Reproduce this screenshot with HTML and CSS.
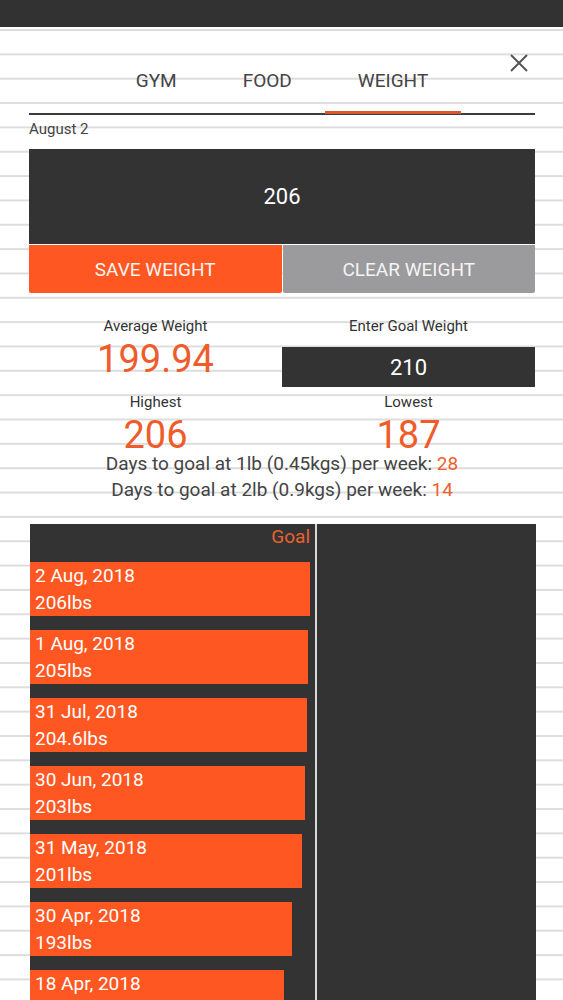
FILE: index.html
```html
<!DOCTYPE html>
<html lang="en">
<head>
<meta charset="utf-8">
<title>Weight</title>
<link rel="stylesheet" href="styles.css">
</head>
<body>
<div class="statusbar"></div>
<main class="page">
  <header class="header">
    <nav class="tabs">
      <div class="tab">GYM</div>
      <div class="tab">FOOD</div>
      <div class="tab active">WEIGHT</div>
    </nav>
    <button class="close" aria-label="Close">
      <svg viewBox="0 0 18 18" width="18" height="18"><path d="M1 1L17 17M17 1L1 17" stroke="#555" stroke-width="2" fill="none"/></svg>
    </button>
  </header>
  <div class="date">August 2</div>
  <div class="weight-input">206</div>
  <div class="actions">
    <button class="btn save">SAVE WEIGHT</button>
    <button class="btn clear">CLEAR WEIGHT</button>
  </div>
  <section class="stats">
    <div class="stat">
      <div class="label">Average Weight</div>
      <div class="value">199.94</div>
    </div>
    <div class="stat">
      <div class="label">Enter Goal Weight</div>
      <div class="goal-input">210</div>
    </div>
    <div class="stat">
      <div class="label">Highest</div>
      <div class="value">206</div>
    </div>
    <div class="stat">
      <div class="label">Lowest</div>
      <div class="value">187</div>
    </div>
  </section>
  <div class="days">
    <div>Days to goal at 1lb (0.45kgs) per week: <span class="num">28</span></div>
    <div>Days to goal at 2lb (0.9kgs) per week: <span class="num">14</span></div>
  </div>
  <section class="chart">
    <div class="bars">
      <div class="goal">Goal</div>
      <div class="bar" style="width:98.1%"><div>2 Aug, 2018</div><div>206lbs</div></div>
      <div class="bar" style="width:97.62%"><div>1 Aug, 2018</div><div>205lbs</div></div>
      <div class="bar" style="width:97.2%"><div>31 Jul, 2018</div><div>204.6lbs</div></div>
      <div class="bar" style="width:96.4%"><div>30 Jun, 2018</div><div>203lbs</div></div>
      <div class="bar" style="width:95.4%"><div>31 May, 2018</div><div>201lbs</div></div>
      <div class="bar" style="width:91.9%"><div>30 Apr, 2018</div><div>193lbs</div></div>
      <div class="bar" style="width:89.05%"><div>18 Apr, 2018</div><div>187lbs</div></div>
    </div>
    <div class="divider"></div>
    <div class="rest"></div>
  </section>
</main>
</body>
</html>
```

FILE: styles.css
```css
* { box-sizing: border-box; }

html, body {
  margin: 0;
  padding: 0;
}

body {
  font-family: Roboto, "Noto Sans", sans-serif;
  color: #333;
  background-color: #fff;
  background-image: linear-gradient(to bottom, transparent 22.35px, #dddddd 22.35px);
  background-size: 100% 24.35px;
  background-position: 0 6.65px;
  background-repeat: repeat;
  overflow: hidden;
}

.statusbar {
  height: 27px;
  background: #323232;
}

.page {
  padding: 0 28px 0 29px;
}

.header {
  position: relative;
}

.tabs {
  display: flex;
  justify-content: center;
  border-bottom: 2px solid #3c3c3c;
}

.tab {
  padding: 44px 33px 20px;
  line-height: 20px;
  font-size: 19px;
  color: #444;
  border-bottom: 3px solid transparent;
  margin-bottom: -1px;
}

.tab.active {
  border-bottom-color: #d9572c;
}

.close {
  position: absolute;
  top: 27px;
  right: 7px;
  width: 18px;
  height: 18px;
  padding: 0;
  border: 0;
  background: transparent;
  display: block;
}

.close svg { display: block; }

.date {
  margin-top: 6px;
  font-size: 15px;
  line-height: 16px;
  color: #444;
}

.weight-input {
  margin-top: 12px;
  height: 95px;
  background: #333;
  color: #fff;
  font-size: 22px;
  display: flex;
  align-items: center;
  justify-content: center;
}

.actions {
  margin-top: 1px;
  display: grid;
  grid-template-columns: 1fr 1fr;
  gap: 1px;
  height: 48px;
}

.btn {
  border: 0;
  margin: 0;
  font-family: Roboto, "Noto Sans", sans-serif;
  font-size: 19px;
  color: #fdf3ef;
  border-radius: 0 0 2px 2px;
}

.btn.save { background: #ff5722; }
.btn.clear { background: #9b9a9c; color: #f4f4f4; }

.stats {
  margin-top: 25px;
  display: grid;
  grid-template-columns: 1fr 1fr;
  row-gap: 7px;
  text-align: center;
}

.label {
  font-size: 15px;
  line-height: 16px;
  color: #333;
}

.value {
  margin-top: 9px;
  font-size: 38px;
  line-height: 32px;
  color: #ef5c2b;
}

.goal-input {
  margin-top: 13px;
  height: 40px;
  background: #333;
  color: #fff;
  font-size: 22px;
  display: flex;
  align-items: center;
  justify-content: center;
}

.days {
  text-align: center;
  font-size: 19px;
  line-height: 26px;
  color: #444;
}

.num { color: #ef5f2c; }

.chart {
  margin: 21px -1px 0 1px;
  height: 520px;
  background: #333;
  display: grid;
  grid-template-columns: 285px 2px 1fr;
}

.bars {
  display: flex;
  flex-direction: column;
  gap: 14px;
}

.goal {
  text-align: right;
  padding-right: 5px;
  font-size: 19px;
  line-height: 26px;
  color: #e8622e;
  margin-bottom: -2px;
}

.bar {
  background: #ff5722;
  color: #fff;
  font-size: 19px;
  line-height: 27px;
  padding-left: 5px;
  white-space: nowrap;
}

.divider {
  background: #d8d8d8;
}
```
